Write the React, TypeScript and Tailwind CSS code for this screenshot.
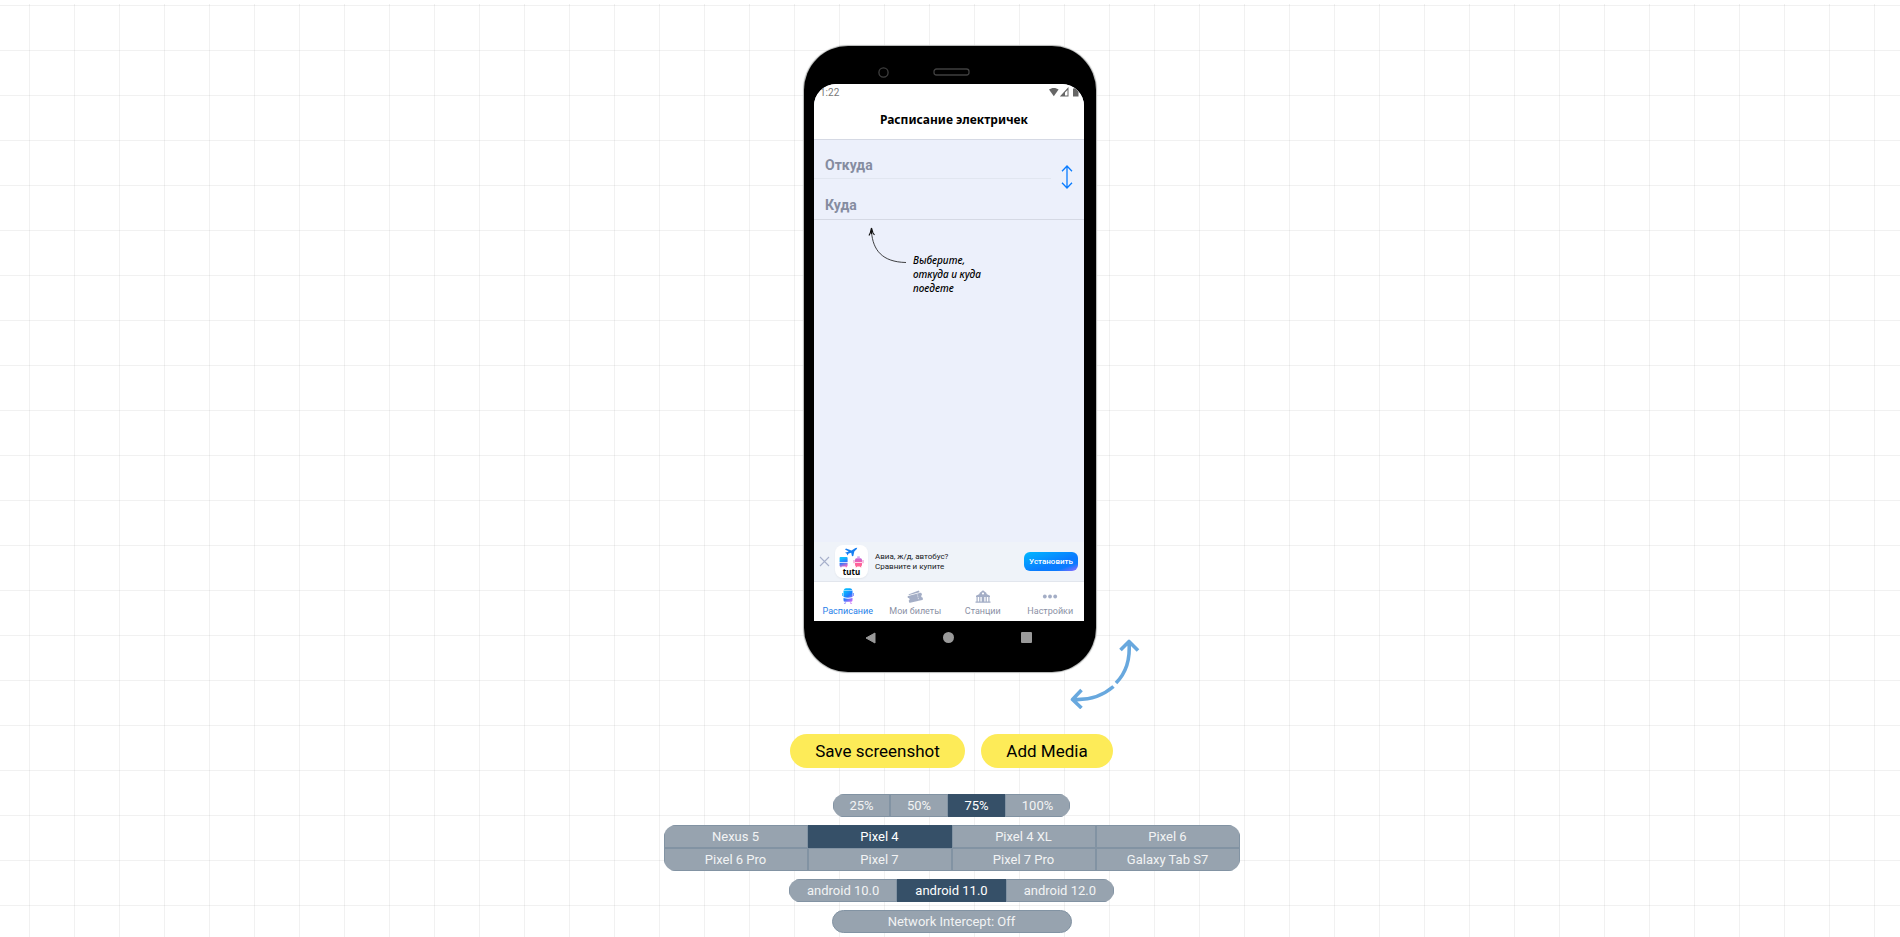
import { useState } from "react";
import clsx from "clsx";

const zooms = ["25%", "50%", "75%", "100%"];
const devices = ["Nexus 5", "Pixel 4", "Pixel 4 XL", "Pixel 6", "Pixel 6 Pro", "Pixel 7", "Pixel 7 Pro", "Galaxy Tab S7"];
const versions = ["android 10.0", "android 11.0", "android 12.0"];

type SegmentsProps = {
  label: string;
  items: string[];
  initial: string;
  className: string;
};

function Segments({ label, items, initial, className }: SegmentsProps) {
  const [current, setCurrent] = useState(initial);
  return (
    <div role="group" aria-label={label} className={clsx("mt-2 grid overflow-hidden rounded-xl", className)}>
      {items.map((item) => (
        <button
          key={item}
          type="button"
          aria-pressed={item === current}
          onClick={() => setCurrent(item)}
          className={clsx(
            "h-[23px] border text-center text-[13px] leading-[21px]",
            item === current
              ? "border-[#365068] bg-[#365068] text-white"
              : "border-[#8293a3] bg-[#97a3af] text-[#f2f3f4]",
          )}
        >
          {item}
        </button>
      ))}
    </div>
  );
}

function StatusBar() {
  return (
    <div className="flex h-4 items-center justify-between pr-[5px] pl-[6px] font-['Roboto',sans-serif] text-[10px] leading-4 text-[#777]">
      <span className="pt-px">1:22</span>
      <svg width="30" height="10" viewBox="0 0 30 10" fill="#666" aria-hidden="true">
        <path d="M0 2.600C2.600.400 7 .400 9.600 2.600L4.800 9.200Z" />
        <path d="M19.500 0V9.500H10.800ZM18.500 3 16 5.500V8.500H18.500Z" fillRule="evenodd" />
        <path d="M24 1.500h1.500V.500h2.500v1h1.500V9.500H24Z" />
      </svg>
    </div>
  );
}

function SearchForm() {
  return (
    <form className="relative flex flex-col border-y border-[#d5d9e4]" onSubmit={(e) => e.preventDefault()}>
      <input
        aria-label="Откуда"
        placeholder="Откуда"
        className="mr-[33px] h-[39px] border-b border-[#e1e6f0] bg-transparent pt-3 pl-[11px] font-['Roboto',sans-serif] text-[14px] leading-5 font-bold outline-none placeholder:text-[#858ca0]"
      />
      <input
        aria-label="Куда"
        placeholder="Куда"
        className="mr-[33px] h-[40px] bg-transparent pt-3 pl-[11px] font-['Roboto',sans-serif] text-[14px] leading-5 font-bold outline-none placeholder:text-[#858ca0]"
      />
      <button type="button" aria-label="Поменять местами" className="absolute top-[25px] right-[11px]">
        <svg width="12" height="24" viewBox="0 0 12 24" fill="none" stroke="#0a7cff" strokeWidth="1.300">
          <path d="M6 1V23M1 6.200 6 1 11 6.200M1 17.800 6 23 11 17.800" />
        </svg>
      </button>
    </form>
  );
}

function TrainIcon() {
  return (
    <svg width="12" height="16" viewBox="0 0 12 16" aria-hidden="true">
      <defs>
        <linearGradient id="train" gradientUnits="userSpaceOnUse" x1="1" y1="2" x2="11" y2="14">
          <stop offset="0.150" stopColor="#08b7ff" />
          <stop offset="0.500" stopColor="#1c7dff" />
          <stop offset="0.900" stopColor="#c268f5" />
        </linearGradient>
      </defs>
      <g fill="url(#train)">
        <path d="M4 .300h4a2.400 2.400 0 0 1 2.200 1.700H1.800A2.400 2.400 0 0 1 4 .300Z" />
        <path d="M1.500 2.600h9V9c-3 1-6 1-9 0Z" />
        <path d="M1.500 9.900c3 1 6 1 9 0v2.300a1.600 1.600 0 0 1-1.600 1.600H3.100a1.600 1.600 0 0 1-1.600-1.600Z" />
        <path d="M.300 5h.800v3H.300ZM10.900 5h.800v3h-.800ZM3 14.400h1.300L3.300 15.800H1.800ZM7.700 14.400H9l1.200 1.400H8.700Z" />
      </g>
    </svg>
  );
}

function TicketsIcon() {
  return (
    <svg width="16" height="13" viewBox="0 0 16 13" fill="#a4aec6" aria-hidden="true">
      <path d="M1.300 4.600 11 .700q.800-.300 1.100.400l.500 1.200L2.200 5Z" />
      <path d="m1.200 6 12.300-3.200q.900-.200 1.100.600l.400 1.700a1.300 1.300 0 0 0 .600 2.500l.300 1.400q.100.800-.700 1L3.100 12.800q-.800.200-1-.600l-.400-1.600a1.300 1.300 0 0 0-.700-2.500L.600 6.900q-.100-.700.600-.900Z" />
      <path d="m10.300 4.500 1.500 5.700" stroke="#fff" strokeWidth="0.700" strokeDasharray="1 0.900" />
    </svg>
  );
}

function StationIcon() {
  return (
    <svg width="16" height="13" viewBox="0 0 16 13" fill="#a4aec6" aria-hidden="true">
      <path
        fillRule="evenodd"
        d="M8 .200 11.500 3v1l3.500 1.800v1.200h-.500v4.500h1v1.300H.500v-1.300h1V7H1V5.800L4.500 4V3ZM8 2.400a1.100 1.100 0 1 0 0 2.200 1.100 1.100 0 0 0 0-2.200ZM2.700 7v4.500h1.500V7ZM5.400 7v4.500h1.300V7ZM9.300 7v4.500h1.300V7ZM11.800 7v4.500h1.500V7Z"
      />
    </svg>
  );
}

function MoreIcon() {
  return (
    <svg width="16" height="13" viewBox="0 0 16 13" fill="#a4aec6" aria-hidden="true">
      <circle cx="2.800" cy="6.500" r="1.900" />
      <circle cx="8" cy="6.500" r="1.900" />
      <circle cx="13.200" cy="6.500" r="1.900" />
    </svg>
  );
}

function TutuLogo() {
  return (
    <div className="flex h-[33px] w-[33px] flex-col items-center rounded-lg bg-white pt-[2px] shadow-xs">
      <svg width="25" height="21" viewBox="0 0 25 21" aria-hidden="true">
        <defs>
          <linearGradient id="bus" gradientUnits="userSpaceOnUse" x1="2" y1="10" x2="6" y2="21">
            <stop offset="0.150" stopColor="#10c0ff" />
            <stop offset="0.500" stopColor="#2878ff" />
            <stop offset="0.900" stopColor="#f46bc1" />
          </linearGradient>
          <linearGradient id="tram" gradientUnits="userSpaceOnUse" x1="19" y1="9" x2="19" y2="21">
            <stop offset="0" stopColor="#a56bf2" />
            <stop offset="0.600" stopColor="#ff5fa0" />
            <stop offset="1" stopColor="#ff6f8f" />
          </linearGradient>
        </defs>
        <path d="m7 1.500 5.500 2L16.500 1l1.700-.200-.400 1.300-2.500 2.400-1 4.500-1.300.300-.800-3.600-2.600.900L8.500 8.600l-.900-2-1.600-.800L9.800 4.500 6 2.500Z" fill="#177ff2" />
        <g fill="url(#bus)">
          <path d="M1.500 10h6.200q.900 0 .900.900v4.300H.600v-4.300q0-.900.900-.900Z" />
          <path d="M.600 16h8v2.800q0 .600-.700.600v.900H6.600v-.9H2.600v.9H1.300v-.9q-.7 0-.7-.6Z" />
        </g>
        <g fill="url(#tram)">
          <path d="M18.200 9.600h2.600v1h-2.600Z" />
          <path d="M17.500 11.200h4a1.500 1.500 0 0 1 1.500 1.500v2.500h-7v-2.500a1.500 1.500 0 0 1 1.500-1.500Z" />
          <path d="M16 16h7v2.200l-1 1.200.700.900h-1.300l-.700-.900h-2.400l-.700.900h-1.300l.700-.900-1-1.200Z" />
          <path d="M14.600 13h.8v3.200h-.8ZM23.600 13h.8v3.200h-.8Z" />
        </g>
      </svg>
      <span className="font-['Noto_Sans',sans-serif] text-[8px] leading-[7px] font-bold text-black">tutu</span>
    </div>
  );
}

function Banner() {
  return (
    <div className="flex h-[39px] items-center bg-[#eff3f9] pr-[6px] pl-[5px]">
      <button type="button" aria-label="Закрыть">
        <svg width="11" height="11" viewBox="0 0 11 11" stroke="#a7b0cb" strokeWidth="1.100">
          <path d="m1 1 9 9M10 1l-9 9" />
        </svg>
      </button>
      <div className="ml-[5px]">
        <TutuLogo />
      </div>
      <p className="ml-[7px] flex-1 font-['Roboto',sans-serif] text-[8px] leading-[10px] text-[#15171b]">
        Авиа, ж/д, автобус?
        <br />
        Сравните и купите
      </p>
      <button
        type="button"
        className="h-[19px] w-[54px] rounded-md bg-[linear-gradient(160deg,#00b9ff_0%,#0a7bff_60%,#0a7bff_78%,#9b6bff_100%)] font-['Roboto',sans-serif] text-[8px] leading-[18px] font-medium text-white"
      >
        Установить
      </button>
    </div>
  );
}

const tabs = [
  { name: "Расписание", icon: <TrainIcon /> },
  { name: "Мои билеты", icon: <TicketsIcon /> },
  { name: "Станции", icon: <StationIcon /> },
  { name: "Настройки", icon: <MoreIcon /> },
];

function TabBar() {
  return (
    <nav className="grid h-10 grid-cols-4 border-t border-[#e2e6ed] bg-white">
      {tabs.map((tab, index) => (
        <a
          key={tab.name}
          href="#"
          className={clsx(
            "flex flex-col items-center pt-[6px] font-['Roboto',sans-serif] text-[9px] leading-[14px] whitespace-nowrap",
            index === 0 ? "text-[#1f80e8]" : "text-[#8b91a5]",
          )}
        >
          <span className="flex h-4 items-center">{tab.icon}</span>
          {tab.name}
        </a>
      ))}
    </nav>
  );
}

function Phone() {
  return (
    <div className="relative flex w-[292px] flex-col rounded-[44px] bg-black pr-3 pl-[10px] shadow-[0_0_1px_1px_#b3b5b4]">
      <div className="flex h-[38px] justify-center pt-[21px]">
        <svg width="92" height="12" viewBox="0 0 92 12" fill="none" stroke="#3f3f3f" strokeWidth="1.300" className="mr-[51px]" aria-hidden="true">
          <circle cx="5.500" cy="5.500" r="4.600" />
          <rect x="56" y="2" width="35" height="6" rx="2.500" />
        </svg>
      </div>
      <div className="flex h-[537px] flex-col overflow-hidden rounded-t-[22px] bg-[#ecf0fb]">
        <div className="h-[55px] bg-white">
          <StatusBar />
          <h1 className="pt-[10px] pl-[66px] font-['Noto_Sans',sans-serif] text-[12px] leading-5 font-bold text-black">
            Расписание электричек
          </h1>
        </div>
        <SearchForm />
        <div className="flex flex-1 items-start pt-[7px] pl-[54px]">
          <svg width="39" height="37" viewBox="0 0 39 37" fill="none" stroke="#111" aria-hidden="true">
            <path d="M3.500 5C5 23 14 35 38 35.500" strokeWidth="0.800" />
            <path d="M3.500 1 2.200 6 1 8.500M3.500 1 5 6l1.500 2M3.500 2v5" strokeWidth="1.100" />
          </svg>
          <p className="mt-[26px] ml-[6px] font-['Noto_Sans',sans-serif] text-[10px] leading-[14px] font-medium text-black italic">
            Выберите,
            <br />
            откуда и куда
            <br />
            поедете
          </p>
        </div>
        <Banner />
        <TabBar />
      </div>
      <div className="flex h-[51px] justify-between pt-[11px] pr-[52px] pl-[51px]">
        <button type="button" aria-label="Back" className="h-3">
          <svg width="11" height="12" viewBox="0 0 11 12" fill="#9a9a9a">
            <path d="M1 6 10 1V11Z" stroke="#9a9a9a" strokeLinejoin="round" />
          </svg>
        </button>
        <button type="button" aria-label="Home" className="size-[11px] rounded-full bg-[#9a9a9a]" />
        <button type="button" aria-label="Recent apps" className="size-[11px] rounded-[1px] bg-[#9a9a9a]" />
      </div>
      <button type="button" aria-label="Rotate" className="absolute right-[-45px] bottom-[-37px]">
        <svg width="72" height="72" viewBox="0 0 72 72" fill="none" stroke="#68a8de" strokeWidth="3.600" strokeLinejoin="round">
          <path d="M60 5C61.500 23 57 36 47 46M51.500 13 60 4.500l9 9" />
          <path d="M44.500 49.500C34 58.500 21 63.500 4 62.500M12.500 53 3.500 62.500l9 8.500" />
        </svg>
      </button>
    </div>
  );
}

export default function App() {
  return (
    <main className="min-h-screen bg-white pt-1 font-['Roboto',sans-serif]">
      <div className="flex min-h-[933px] flex-col items-center bg-[linear-gradient(#0000000e_1px,transparent_1px),linear-gradient(90deg,#0000000e_1px,transparent_1px)] bg-size-[45px_45px] bg-position-[29px_1px] pt-[42px]">
        <Phone />
        <div className="mt-[62px] flex flex-col items-center pl-[3px]">
          <div className="mb-[18px] flex gap-4">
            <button type="button" className="h-[34px] w-[175px] rounded-full bg-[#fdeb58] text-[17px] leading-[32px] text-black">
              Save screenshot
            </button>
            <button type="button" className="h-[34px] w-[132px] rounded-full bg-[#fdeb58] text-[17px] leading-[32px] text-black">
              Add Media
            </button>
          </div>
          <Segments label="Zoom" items={zooms} initial="75%" className="grid-cols-[57px_58px_57px_65px]" />
          <Segments label="Device" items={devices} initial="Pixel 4" className="w-[576px] grid-cols-4" />
          <Segments label="Version" items={versions} initial="android 11.0" className="w-[325px] grid-cols-3" />
          <button type="button" className="mt-2 h-[23px] w-[240px] rounded-xl border border-[#8293a3] bg-[#97a3af] text-[13px] leading-[21px] text-[#f2f3f4]">
            Network Intercept: Off
          </button>
        </div>
      </div>
    </main>
  );
}
